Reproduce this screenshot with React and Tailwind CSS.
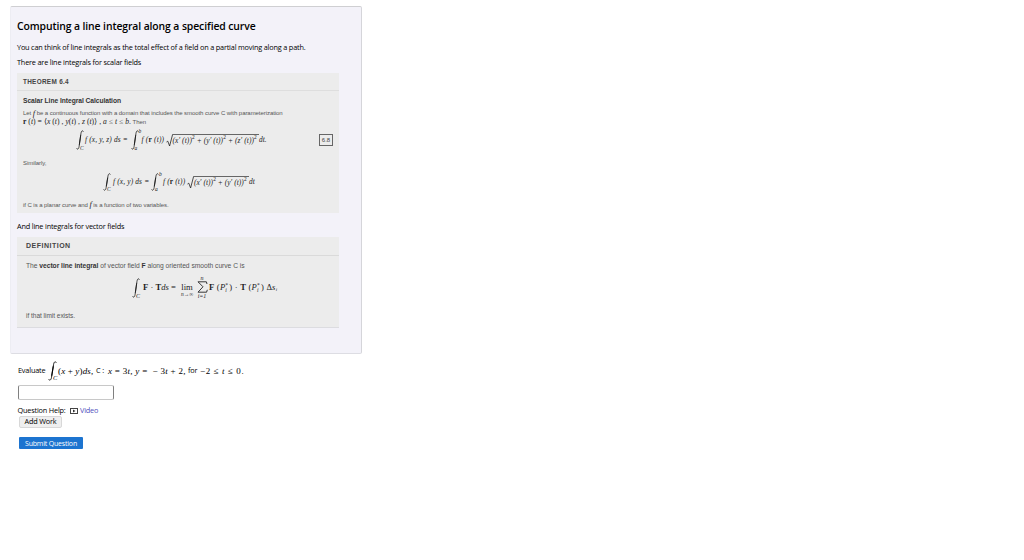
const SERIF = 'font-["Liberation_Serif",serif]';

function Integral({ className }) {
  return (
    <svg viewBox="0 0 9 21" className={className} fill="none" stroke="currentColor" preserveAspectRatio="none">
      <path d="M8.3 1.8C7.4 .1 6.2 .5 5.6 3.5L3.5 17.2C3 20.3 1.5 20.8 .6 19.2" strokeWidth="0.9" />
      <path d="M5.3 5.5L3.7 15.5" strokeWidth="1.1" />
    </svg>
  );
}

function Radical() {
  return (
    <svg viewBox="0 0 7 13" className="h-[13px] w-[7px] shrink-0" fill="none" stroke="currentColor">
      <path d="M.5 8L1.8 7.2L3.6 12L6.6 .5H7" strokeWidth="0.8" />
    </svg>
  );
}

function Seg({ className, children }) {
  return <span className={`shrink-0 whitespace-nowrap ${className}`}>{children}</span>;
}

function Sup({ children }) {
  return <sup className="top-[-4px] text-[5.4px] leading-none not-italic">{children}</sup>;
}

// P with the star stacked over the index i
function PStar() {
  return (
    <>
      <i>P</i>
      <span className="inline-flex h-[9px] w-[4px] flex-col justify-between align-middle text-[5.5px] leading-[5px] tracking-normal">
        <span>*</span>
        <i>i</i>
      </span>
    </>
  );
}

export default function App() {
  return (
    <div className='h-[560px] w-[1024px] overflow-hidden bg-white pl-2.5 pt-1.5 font-["Open_Sans",sans-serif] text-[7.3px] leading-none tracking-[-0.18px] text-black'>
      {/* Lesson panel */}
      <section className="h-[348px] w-[352px] rounded-[2px] border border-b-[#dddde3] border-l-[#ededf3] border-r-[#d5d5da] border-t-[#cfcfd2] bg-[#f3f2f9] pl-1.5">
        <h1 className="flex h-[38px] items-center whitespace-nowrap text-[10.4px] font-semibold tracking-[-0.1px]">
          Computing a line integral along a specified curve
        </h1>
        <p className="flex h-[5px] items-center whitespace-nowrap">
          You can think of line integrals as the total effect of a field on a partial moving along a path.
        </p>
        <p className="mt-[10px] flex h-[5px] items-center whitespace-nowrap">There are line integrals for scalar fields</p>

        <div className='mt-[8px] h-[140px] w-[322px] bg-[#ececec] font-["Liberation_Sans",sans-serif] text-[6px] tracking-[-0.06px] text-[#555]'>
          <h2 className="flex h-[18px] items-center border-b border-[#dedede] pl-1.5 pt-[1px] text-[6.4px] font-bold tracking-[0.3px] text-[#444]">
            THEOREM 6.4
          </h2>
          <h3 className="flex h-[20px] items-center pl-1.5 pt-[1px] text-[6.7px] font-bold tracking-[-0.05px] text-[#333]">
            Scalar Line Integral Calculation
          </h3>
          <p className="flex h-[4px] items-center whitespace-pre pl-1.5">
            Let <i className={`${SERIF} text-[8.5px] text-[#222]`}>f</i> be a continuous function with a domain that includes the smooth curve C with parameterization
          </p>
          <p className="mt-[2px] flex h-[8px] items-center whitespace-pre pl-1.5 pt-[1px]">
            <span className={`${SERIF} text-[7.6px] tracking-[0.04px] text-[#222]`}>
              <b>r</b> (<i>t</i>) = ⟨<i>x</i> (<i>t</i>) , <i>y</i>(<i>t</i>) , <i>z</i> (<i>t</i>)⟩ , <i>a</i> ≤ <i>t</i> ≤ <i>b</i>.
            </span>
            {' Then'}
          </p>
          <div className={`mt-[4px] flex h-[22px] items-center pl-[59px] pr-[6px] text-[7.4px] italic tracking-[0.15px] text-[#222] ${SERIF}`}>
            <Integral className="h-[20px] w-[8px] shrink-0" />
            <Seg className="-ml-[4px] w-[5px] self-end text-[5.5px]">C</Seg>
            <Seg className="w-[45.5px]">f (x, y, z) ds =</Seg>
            <Integral className="h-[20px] w-[8px] shrink-0" />
            <span className="-ml-[4px] flex h-full w-[7px] shrink-0 flex-col justify-between text-[5.5px]">
              <span className="pl-[4px]">b</span>
              <span>a</span>
            </span>
            <Seg className="w-[24px] tracking-[0.2px]">f (<b className="not-italic">r</b> (t))</Seg>
            <Radical />
            <Seg className="h-[13px] w-[86.5px] border-t border-[#666] pt-[2px] tracking-[0.1px]">
              (x′ (t))<Sup>2</Sup> + (y′ (t))<Sup>2</Sup> + (z′ (t))<Sup>2</Sup>
            </Seg>
            <Seg className="tracking-normal">dt.</Seg>
            <span className='ml-auto flex h-[12px] w-[14px] items-center justify-center border border-[#666] font-["Liberation_Sans",sans-serif] text-[6px] not-italic tracking-normal text-[#444]'>
              6.8
            </span>
          </div>
          <p className="mt-[9px] flex h-[6px] items-center pl-1.5">Similarly,</p>
          <div className={`mt-[5px] flex h-[22px] items-center pl-[86px] text-[7.4px] italic tracking-[0.15px] text-[#222] ${SERIF}`}>
            <Integral className="h-[18px] w-[8px] shrink-0" />
            <Seg className="-ml-[4px] w-[6px] self-end pb-[1px] text-[5.5px]">C</Seg>
            <Seg className="w-[38px]">f (x, y) ds =</Seg>
            <Integral className="h-[18px] w-[8px] shrink-0" />
            <span className="-ml-[4px] flex h-[20px] w-[8px] shrink-0 flex-col justify-between text-[5.5px]">
              <span className="pl-[4px]">b</span>
              <span>a</span>
            </span>
            <Seg className="w-[24px] tracking-[0.15px]">f (<b className="not-italic">r</b> (t))</Seg>
            <Radical />
            <Seg className="h-[13px] w-[55px] border-t border-[#666] pt-[2px] tracking-[0.06px]">
              (x′ (t))<Sup>2</Sup> + (y′ (t))<Sup>2</Sup>
            </Seg>
            <Seg className="tracking-normal">dt</Seg>
          </div>
          <p className="mt-[8px] flex h-[6px] items-center whitespace-pre pl-1.5 pt-[1px]">
            if C is a planar curve and <i className={`${SERIF} text-[8.5px] text-[#222]`}>f</i> is a function of two variables.
          </p>
        </div>

        <p className="mt-[11px] flex h-[5px] items-center whitespace-nowrap">And line integrals for vector fields</p>

        <div className='mt-[8px] h-[91px] w-[322px] border-b border-[#dcdce0] bg-[#ececec] font-["Liberation_Sans",sans-serif] text-[6.7px] tracking-[-0.02px] text-[#555]'>
          <h2 className="flex h-[19px] items-center border-b border-[#dadada] pb-[1px] pl-[9px] text-[7px] font-bold tracking-[0.5px] text-[#444]">
            DEFINITION
          </h2>
          <p className="flex h-[20px] items-center whitespace-pre pl-[9px]">
            The <b className="text-[#333]">vector line integral</b> of vector field <b className="text-[#333]">F</b> along oriented smooth curve C is
          </p>
          <div className={`flex h-[23px] items-center pl-[115px] text-[8.6px] tracking-normal text-[#222] ${SERIF}`}>
            <Integral className="h-[20px] w-[8px] shrink-0" />
            <Seg className="-ml-[4px] w-[7px] self-end text-[6px] italic">C</Seg>
            <Seg className="w-[36px]"><b>F</b> · <b>T</b><i>ds</i> =</Seg>
            <span className="flex w-[16px] shrink-0 flex-col items-center pt-[5px]">
              lim
              <i className="whitespace-nowrap text-[5.5px] leading-[5px]">n→∞</i>
            </span>
            <span className="flex w-[14px] shrink-0 flex-col items-center text-[6px] italic">
              <span className="h-[4px] leading-[3px]">n</span>
              <svg viewBox="0 0 11 12" className="h-[12px] w-[11px]" fill="none" stroke="currentColor" strokeWidth="0.9">
                <path d="M10 3L9.4 .8H1L6 5.8L1 11.2H9.6L10.3 8.8" />
              </svg>
              <span>i=1</span>
            </span>
            <Seg className="tracking-[0.2px]">
              <b>F</b> (<PStar />) · <b>T</b> (<PStar />) Δ<i>s</i><sub className="text-[5px] italic">i</sub>
            </Seg>
          </div>
          <p className="mt-[14px] flex h-[6px] items-center pl-[9px] pt-[1px] text-[6.5px]">if that limit exists.</p>
        </div>
      </section>

      {/* Question */}
      <div className="mt-[6px] flex h-[22px] items-center pl-2">
        <Seg className="w-[30px]">Evaluate</Seg>
        <Integral className="h-[20px] w-[9px] shrink-0" />
        <Seg className={`-ml-[4px] w-[5px] self-end pb-[1px] text-[6.5px] italic ${SERIF}`}>C</Seg>
        <Seg className={`w-[38px] text-[9px] tracking-[0.15px] ${SERIF}`}>(<i>x</i> + <i>y</i>)<i>ds</i>,</Seg>
        <Seg className="w-[12px]">C :</Seg>
        <Seg className={`w-[80px] text-[9px] tracking-[0.28px] ${SERIF}`}>
          <i>x</i> = 3<i>t</i>, <i>y</i> = &nbsp;− 3<i>t</i> + 2,
        </Seg>
        <Seg className="w-[12px]">for</Seg>
        <Seg className={`text-[9px] tracking-[0.6px] ${SERIF}`}>−2 ≤ <i>t</i> ≤ 0.</Seg>
      </div>
      <input
        type="text"
        className="ml-2 mt-[3px] block h-[15px] w-[96px] rounded-[2px] border border-solid border-x-[#808080] border-y-[#c8c8c8] bg-white"
      />
      <div className="mt-[6px] flex h-[9px] items-center whitespace-nowrap pl-[7.5px]">
        <Seg className="w-[52.5px]">Question Help:</Seg>
        <svg viewBox="0 0 8 6" className="h-[6px] w-[8px]">
          <rect x=".5" y=".5" width="7" height="5" fill="white" stroke="#444" />
          <path d="M3 1.5L5.5 3L3 4.5Z" fill="#333" />
        </svg>
        <a className="ml-[2px] text-[#5050bd]">Video</a>
      </div>
      <button className="ml-[9px] mt-[1px] block h-[12px] w-[43px] rounded-[2px] border border-[#d8d8d8] bg-[#efefef] tracking-[-0.2px]">
        Add Work
      </button>
      <button className="ml-[9px] mt-[9px] block h-[12px] w-[64px] whitespace-nowrap rounded-[1px] bg-[#1c74d0] text-[7px] text-white">
        Submit Question
      </button>
    </div>
  );
}
